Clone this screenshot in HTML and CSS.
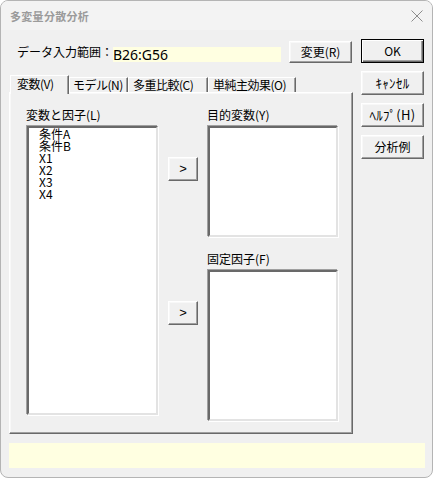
FILE: index.html
```html
<!DOCTYPE html>
<html>
	<head>
		<meta charset="UTF-8">
		<title>多変量分散分析</title>
		<link rel="stylesheet" href="styles.css">
	</head>

	<body>
		<div class="window">
			<div class="titlebar">
				<span class="title">多変量分散分析</span>
				<svg class="close" width="12" height="12" viewBox="0 0 12 12">
					<path d="M0.5 0.5 L11.5 11.5 M11.5 0.5 L0.5 11.5" stroke="#8c8c8c" stroke-width="1" fill="none"/>
				</svg>
			</div>

			<div class="main">
				<div class="leftCol">
					<div class="rangeRow">
						<span class="rangeLabel">データ入力範囲：</span>
						<span class="rangeBox">B26:G56</span>
						<span class="btn changeBtn">変更(R)</span>
					</div>

					<ul class="tabs">
						<li class="tab current tabV">変数(V)</li>
						<li class="tab tabN">モデル(N)</li>
						<li class="tab tabC">多重比較(C)</li>
						<li class="tab tabO">単純主効果(O)</li>
					</ul>

					<div class="panel">
						<div class="colSrc">
							<div class="lbl">変数と因子(L)</div>
							<ul class="listBox srcList">
								<li>条件A</li>
								<li>条件B</li>
								<li>X1</li>
								<li>X2</li>
								<li>X3</li>
								<li>X4</li>
							</ul>
						</div>

						<div class="colMove">
							<span class="btn moveBtn moveY">&gt;</span>
							<span class="btn moveBtn moveF">&gt;</span>
						</div>

						<div class="colDst">
							<div class="lbl">目的変数(Y)</div>
							<ul class="listBox yList"></ul>
							<div class="lbl lblF">固定因子(F)</div>
							<ul class="listBox fList"></ul>
						</div>
					</div>
				</div>

				<div class="rightCol">
					<span class="btn sideBtn okBtn">OK</span>
					<span class="btn sideBtn kana">ｷｬﾝｾﾙ</span>
					<span class="btn sideBtn kana">ﾍﾙﾌﾟ(H)</span>
					<span class="btn sideBtn">分析例</span>
				</div>
			</div>

			<div class="statusBar"></div>
		</div>
	</body>
</html>
```

FILE: styles.css
```css
*{
	margin: 0;
	padding: 0;
	box-sizing: border-box;
}
ul,li{
	list-style: none;
}

html,body{
	height: 100%;
	overflow: hidden;
	background: #ffffff;
}

body{
	font-family: "Noto Sans CJK JP", "Noto Sans", sans-serif;
	font-size: 12px;
	line-height: 14px;
	color: #000;
}

.window{
	width: 433px;
	height: 478px;
	border: 1px solid #b4b4b4;
	border-radius: 8px;
	background-color: #f0f0f0;
	overflow: hidden;
}

.titlebar{
	display: flex;
	align-items: center;
	justify-content: space-between;
	height: 29px;
	padding: 0 9px 0 9px;
	background-color: #f3f3f3;
}

.titlebar .title{
	font-size: 11px;
	color: #9b9b9b;
	font-weight: bold;
	letter-spacing: 0.3px;
}

.titlebar .close{
	display: block;
	margin-top: 1px;
}

.main{
	display: flex;
	gap: 8px;
	padding: 9px 8px 0 8px;
}

.leftCol{
	width: 344px;
}

.rangeRow{
	display: flex;
	align-items: flex-start;
	height: 24px;
}

.rangeLabel{
	width: 96px;
	margin: 6px 0 0 8px;
	white-space: nowrap;
}

.rangeBox{
	width: 168px;
	height: 15px;
	margin-top: 8px;
	background-color: #ffffe1;
	font-family: "Noto Sans", sans-serif;
	font-size: 14px;
	line-height: 15px;
}

.btn{
	display: flex;
	align-items: center;
	justify-content: center;
	background-color: #f0f0f0;
	border: 1px solid;
	border-color: #ffffff #696969 #696969 #ffffff;
	box-shadow: inset -1px -1px #a0a0a0, inset 1px 1px #f8f8f8;
	white-space: nowrap;
}

.changeBtn{
	width: 63px;
	height: 22px;
	margin: 2px 0 0 8px;
}

.tabs{
	display: flex;
	align-items: flex-end;
	height: 17px;
	margin-top: 12px;
	padding-left: 1px;
}

.tab{
	height: 15px;
	padding-left: 4px;
	border-top: 1px solid #ffffff;
	border-left: 1px solid #ffffff;
	border-right: 1px solid #696969;
	box-shadow: inset -1px 0 #a0a0a0;
	line-height: 13px;
	letter-spacing: -0.5px;
	white-space: nowrap;
	overflow: hidden;
}

.tab.current{
	position: relative;
	z-index: 1;
	height: 19px;
	margin-bottom: -2px;
	padding-left: 6px;
	background-color: #f0f0f0;
	line-height: 15px;
}

.tabV{
	width: 59px;
}

.tabN{
	width: 59px;
	padding-left: 3px;
}

.tabC{
	width: 80px;
}

.tabO{
	width: 88px;
}

.panel{
	display: flex;
	gap: 9px;
	height: 342px;
	padding: 15px 0 0 16px;
	border: 1px solid;
	border-color: #ffffff #696969 #696969 #ffffff;
	box-shadow: inset -1px -1px #a0a0a0, inset 1px 1px #f8f8f8;
}

.lbl{
	height: 17px;
	line-height: 14px;
	white-space: nowrap;
}

.listBox{
	background-color: #ffffff;
	border: 2px solid;
	border-color: #696969 #e3e3e3 #e3e3e3 #696969;
	box-shadow: -1px -1px #a0a0a0, 1px 1px #ffffff;
	margin-left: 1px;
	margin-top: 1px;
}

.colSrc{
	width: 133px;
}

.srcList{
	width: 131px;
	height: 289px;
	padding: 0 0 0 10px;
	line-height: 12px;
}

.srcList li{
	height: 12px;
}

.colMove{
	width: 30px;
}

.moveBtn{
	width: 30px;
	height: 24px;
	font-family: "Liberation Sans", sans-serif;
	font-size: 13px;
}

.moveY{
	margin-top: 49px;
}

.moveF{
	margin-top: 120px;
}

.colDst{
	width: 132px;
}

.yList{
	width: 130px;
	height: 111px;
}

.lblF{
	margin-top: 15px;
}

.fList{
	width: 130px;
	height: 151px;
}

.rightCol{
	display: flex;
	flex-direction: column;
	gap: 8px;
	width: 63px;
}

.sideBtn{
	width: 63px;
	height: 24px;
}

.sideBtn.kana{
	font-size: 13px;
	letter-spacing: 0.3px;
}

.okBtn{
	border: 1px solid #000000;
	box-shadow: inset 1px 1px #ffffff, inset -1px -1px #696969, inset -2px -2px #a0a0a0;
}

.statusBar{
	width: 416px;
	height: 25px;
	margin: 9px 0 0 8px;
	background-color: #ffffe1;
}
```
